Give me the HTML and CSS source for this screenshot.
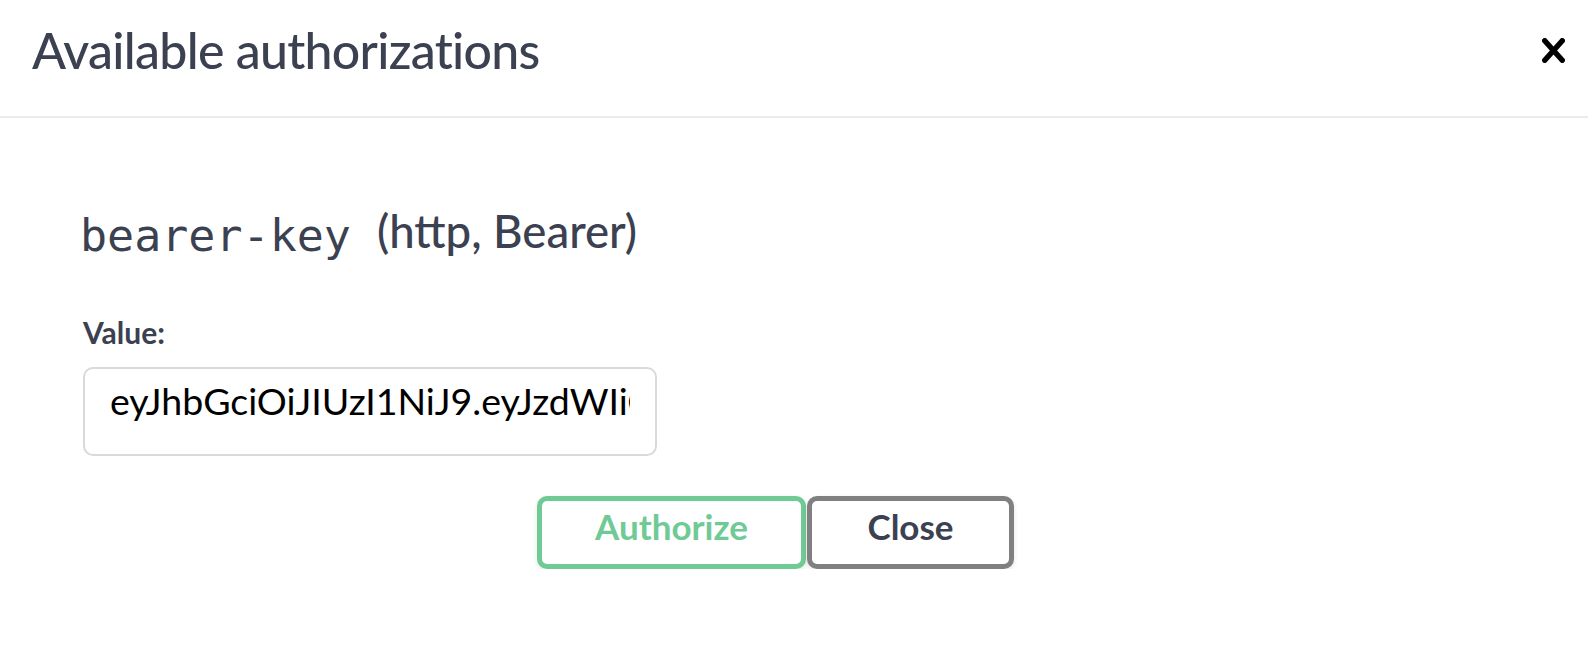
FILE: index.html
```html
<!DOCTYPE html>
<html lang="en">
<head>
<meta charset="utf-8">
<title>Available authorizations</title>
<link rel="stylesheet" href="styles.css">
</head>
<body>
<div class="modal">
  <header class="modal-header">
    <h3 class="modal-title">Available authorizations</h3>
    <button class="close-modal" aria-label="Close">
      <svg width="23" height="25" viewBox="0 0 23 25"><path d="M2.75 2.75 L20.25 22.25 M20.25 2.75 L2.75 22.25" stroke="#000" stroke-width="5.5" stroke-linecap="round" fill="none"/></svg>
    </button>
  </header>
  <div class="modal-content">
    <h4 class="scheme"><code class="scheme-name">bearer-key</code><span class="scheme-type">(http, Bearer)</span></h4>
    <label class="field-label" for="token">Value:</label>
    <input id="token" class="token-input" type="text" value="eyJhbGciOiJIUzI1NiJ9.eyJzdWIiOiJ1c2VyIiwiaWF0IjoxNjAwMDAwMDAwfQ.c2lnbmF0dXJl">
    <div class="actions">
      <button class="btn btn-authorize">Authorize</button>
      <button class="btn btn-close">Close</button>
    </div>
  </div>
</div>
</body>
</html>
```
FILE: styles.css
```css
html, body {
  margin: 0;
  padding: 0;
  background: #fff;
}

body {
  font-family: Lato, "Noto Sans CJK KR", sans-serif;
  color: #3b4151;
}

.modal-header {
  display: flex;
  align-items: center;
  padding: 20px 23px 36px 32px;
  border-bottom: 2px solid #ebebeb;
}

.modal-title {
  flex: 1;
  margin: 0;
  font-size: 50px;
  font-weight: 500;
  line-height: 60px;
  letter-spacing: -0.7px;
  color: #3b4151;
}

.close-modal {
  display: flex;
  background: none;
  border: 0;
  padding: 0;
  width: 23px;
  height: 25px;
  cursor: pointer;
}

.modal-content {
  padding: 0 120px 0 83px;
}

.scheme {
  margin: 83px 0 0;
  font-size: 45.5px;
  font-weight: 500;
  line-height: 60px;
  color: #3b4151;
}

.scheme-name {
  font-family: "DejaVu Sans Mono", monospace;
  font-size: 45px;
  font-weight: 400;
  vertical-align: -3px;
  margin-left: -3px;
  margin-right: 26px;
}

.field-label {
  display: block;
  margin-top: 48px;
  font-size: 30px;
  font-weight: 700;
  line-height: 36px;
  color: #3b4151;
}

.token-input {
  display: block;
  box-sizing: border-box;
  width: 574px;
  height: 89px;
  margin-top: 17px;
  padding: 0 25px 22px;
  border: 2px solid #d9d9d9;
  border-radius: 10px;
  font-family: Lato, "Noto Sans CJK KR", sans-serif;
  font-size: 37.5px;
  color: #000;
  background: #fff;
  outline: none;
}

.actions {
  display: flex;
  justify-content: center;
  gap: 1px;
  margin-top: 40px;
}

.btn {
  box-sizing: border-box;
  height: 73px;
  padding: 0 0 14px;
  border: 5px solid #808080;
  border-radius: 10px;
  background: #fff;
  font-family: Lato, "Noto Sans CJK KR", sans-serif;
  font-size: 35px;
  font-weight: 700;
  box-shadow: 0 2px 5px rgba(0, 0, 0, 0.1);
  cursor: pointer;
}

.btn-authorize {
  width: 269px;
  border-color: #70ca95;
  color: #70ca95;
}

.btn-close {
  width: 207px;
  border-color: #808080;
  color: #3b4151;
}
```
